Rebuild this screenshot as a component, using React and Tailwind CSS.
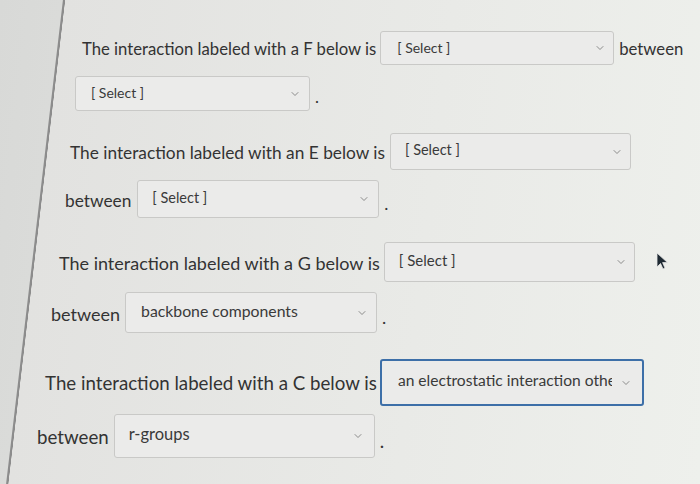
import React from "react";
import { ChevronDown } from "lucide-react";

const Select = ({ value, className = "", textClass = "", focused = false }) => (
  <div
    className={`flex items-center justify-between rounded-[3px] bg-[#ebebea] ${
      focused ? "border-2 border-[#3d6fa8]" : "border border-[#c9c9c7]"
    } ${className}`}
  >
    <span className={`overflow-hidden whitespace-nowrap text-[#3a3a3a] ${textClass}`}>{value}</span>
    <ChevronDown size={12} strokeWidth={1.5} className="shrink-0 text-[#6b6b6b]" />
  </div>
);

const Pointer = () => (
  <svg width="14" height="18" viewBox="0 0 14 18" className="shrink-0">
    <path d="M1 1 L1 15 L4.5 11.5 L7 17 L9 16 L6.6 10.6 L11.5 10.6 Z" fill="#1f2a33" stroke="#e8e8e8" strokeWidth="0.8" />
  </svg>
);

export default function App() {
  return (
    <div
      className="w-[700px] h-[484px] overflow-hidden text-[#333] bg-[linear-gradient(96.7deg,#d8d9d7_0px,#dadbd9_62px,#8c8c8c_63px,#8c8c8c_64.5px,#e2e2e0_65px,#e9eae7_60%,#eef0ec_100%)]"
      style={{ fontFamily: "Lato, 'Open Sans', sans-serif" }}
    >
      {/* F */}
      <div className="pt-[31px] pl-[82px] text-[16.7px]">
        <div className="flex items-center h-[34px]">
          <span className="mt-[3px]">The interaction labeled with a F below is</span>
          <Select value="[ Select ]" className="ml-[4px] w-[234px] h-[34px] pl-[16px] pr-[7px]" textClass="text-[14px] -mt-[2px]" />
          <span className="ml-[5px] mt-[3px]">between</span>
        </div>
        <div className="flex items-center mt-[11px] -ml-[7px]">
          <Select value="[ Select ]" className="w-[235px] h-[35px] pl-[15px] pr-[8px]" textClass="text-[14px] -mt-[2px]" />
          <span className="ml-[5px] mt-[8px]">.</span>
        </div>
      </div>

      {/* E */}
      <div className="pt-[22px] pl-[70px] text-[17.3px]">
        <div className="flex items-center h-[37px]">
          <span className="mt-[3px]">The interaction labeled with an E below is</span>
          <Select value="[ Select ]" className="ml-[5px] w-[241px] h-[37px] pl-[14px] pr-[7px]" textClass="text-[14.5px] -mt-[3px]" />
        </div>
        <div className="flex items-center mt-[10px] -ml-[5px]">
          <span className="mt-[3px]">between</span>
          <Select value="[ Select ]" className="ml-[6px] w-[242px] h-[38px] pl-[14px] pr-[8px]" textClass="text-[14.5px] -mt-[3px]" />
          <span className="ml-[5px] mt-[10px]">.</span>
        </div>
      </div>

      {/* G */}
      <div className="pt-[24px] pl-[59px] text-[18px]">
        <div className="flex items-center h-[40px]">
          <span className="mt-[3px]">The interaction labeled with a G below is</span>
          <Select value="[ Select ]" className="ml-[4px] w-[251px] h-[40px] pl-[14px] pr-[7px]" textClass="text-[15px] -mt-[3px]" />
          <span className="ml-[21px] mt-[-2px]">
            <Pointer />
          </span>
        </div>
        <div className="flex items-center mt-[10px] -ml-[8px]">
          <span className="mt-[3px]">between</span>
          <Select value="backbone components" className="ml-[5px] w-[252px] h-[41px] pl-[15px] pr-[8px]" textClass="text-[15.8px] -mt-[3px]" />
          <span className="ml-[5px] mt-[10px]">.</span>
        </div>
      </div>

      {/* C */}
      <div className="pt-[26px] pl-[45px] text-[18.7px]">
        <div className="flex items-center h-[47px]">
          <span className="mt-[2px]">The interaction labeled with a C below is</span>
          <Select
            value="an electrostatic interaction other than a hydrogen bond"
            focused
            className="ml-[3px] w-[264px] h-[47px] pl-[16px] pr-[10px] gap-[8px]"
            textClass="text-[15.6px] -mt-[4px]"
          />
        </div>
        <div className="flex items-center mt-[8px] -ml-[8px]">
          <span className="mt-[3px]">between</span>
          <Select value="r-groups" className="ml-[5px] w-[261px] h-[44px] pl-[14px] pr-[10px]" textClass="text-[16.5px] -mt-[4px]" />
          <span className="ml-[5px] mt-[10px]">.</span>
        </div>
      </div>
    </div>
  );
}
